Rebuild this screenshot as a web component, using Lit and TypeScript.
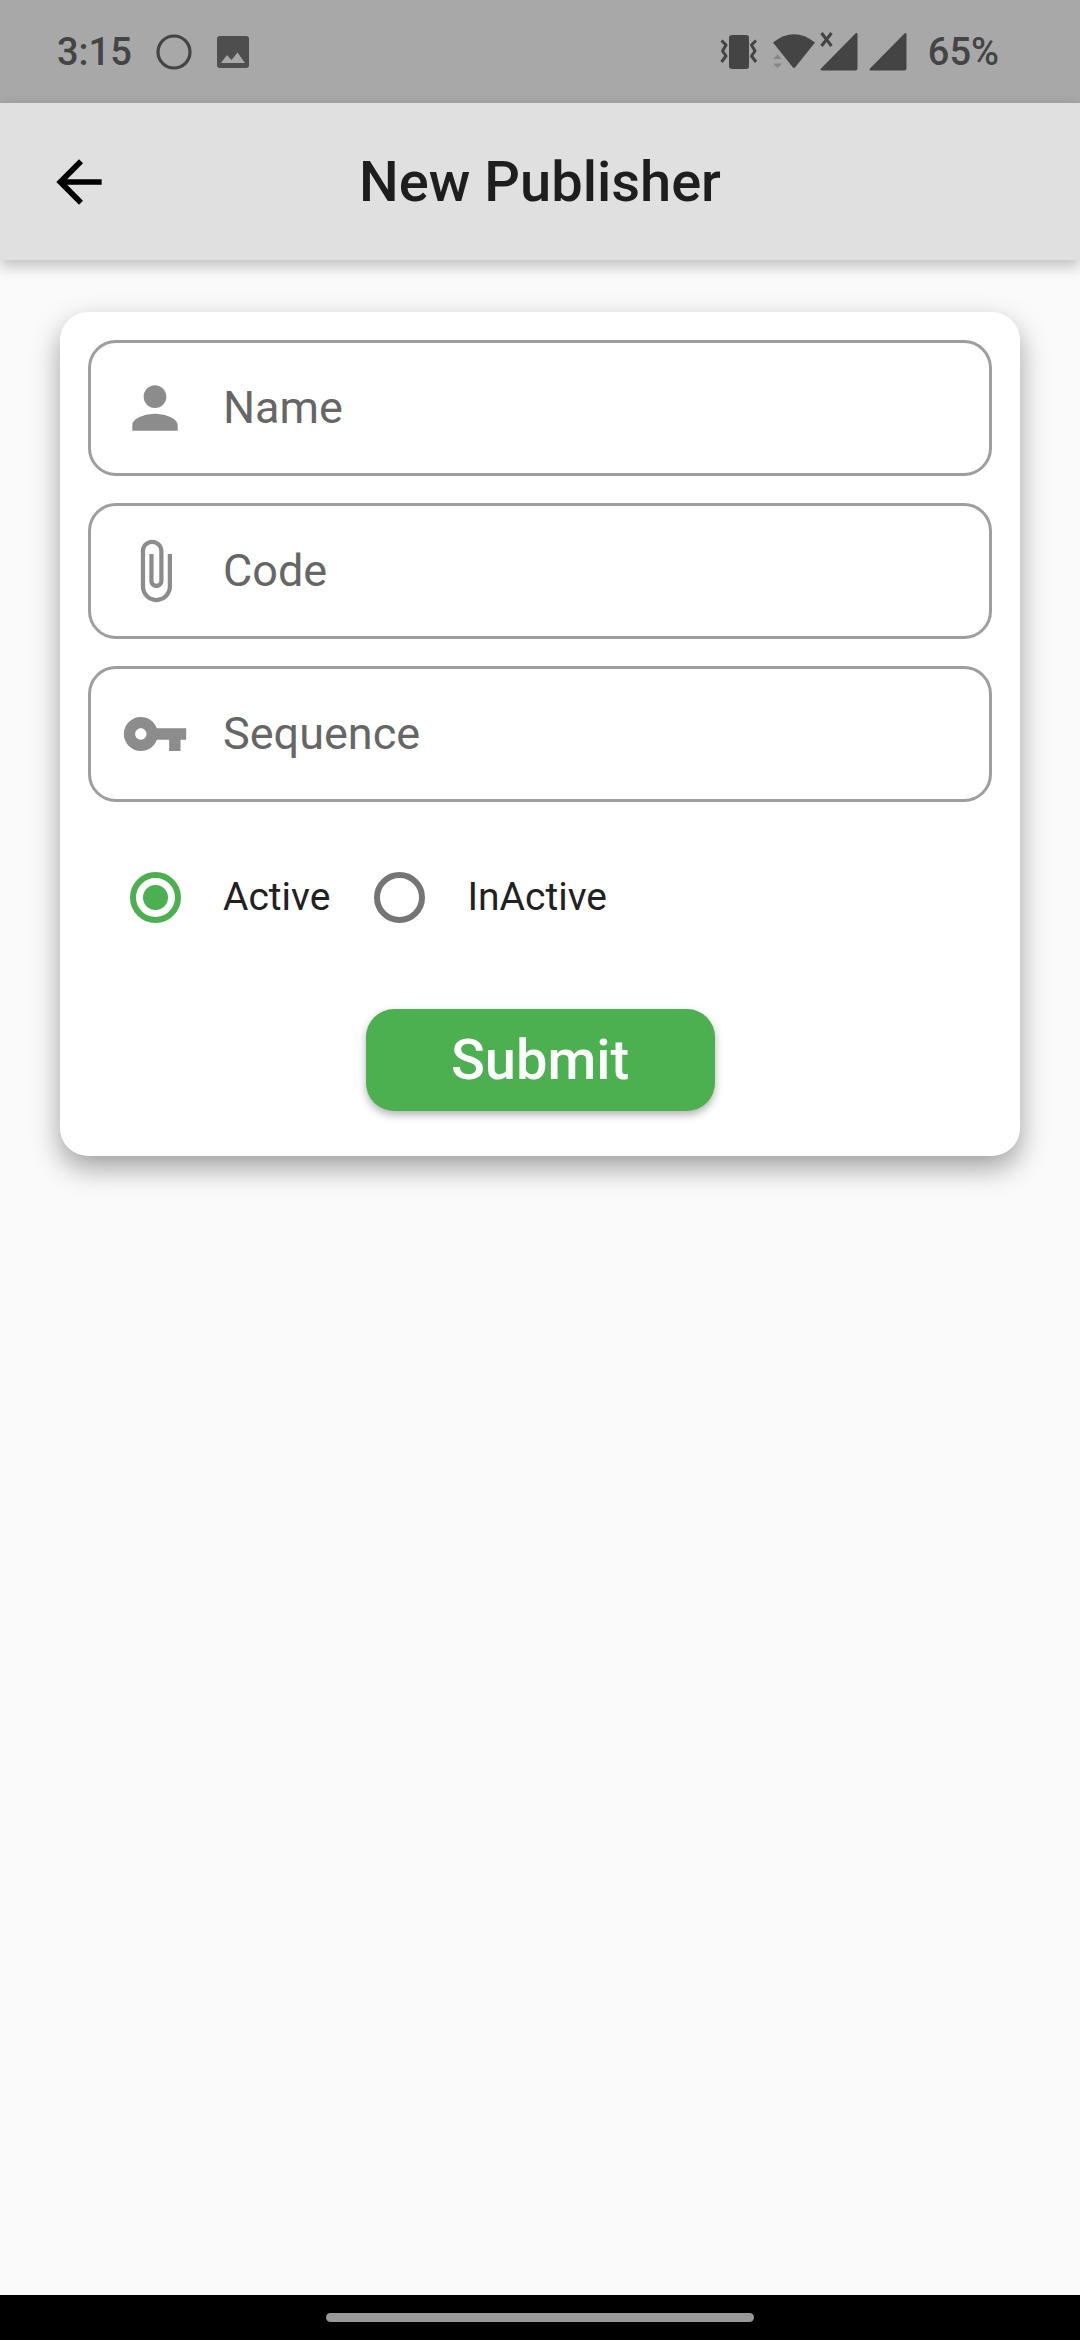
import { LitElement, html, css, svg } from "lit";
import { customElement, property, state } from "lit/decorators.js";

const icons = {
  person: svg`<path d="M12 12c2.21 0 4-1.79 4-4s-1.79-4-4-4-4 1.79-4 4 1.79 4 4 4zm0 2c-2.67 0-8 1.34-8 4v2h16v-2c0-2.66-5.33-4-8-4z"/>`,
  clip: svg`<path d="M16.5 6v11.5c0 2.21-1.79 4-4 4s-4-1.79-4-4V5c0-1.38 1.12-2.5 2.5-2.5s2.500 1.120 2.500 2.500v10.500c0 .55-.45 1-1 1s-1-.45-1-1V6H10v9.500c0 1.380 1.120 2.500 2.500 2.500s2.500-1.120 2.500-2.500V5c0-2.210-1.790-4-4-4S7 2.790 7 5v12.500c0 3.040 2.460 5.500 5.500 5.500s5.500-2.460 5.500-5.500V6h-1.500z"/>`,
  key: svg`<path d="M12.650 10C11.830 7.670 9.610 6 7 6c-3.310 0-6 2.690-6 6s2.690 6 6 6c2.610 0 4.830-1.670 5.650-4H17v4h4v-4h2v-4H12.650zM7 14c-1.100 0-2-.9-2-2s.9-2 2-2 2 .9 2 2-.9 2-2 2z"/>`,
};

type IconName = keyof typeof icons;

@customElement("status-bar")
export class StatusBar extends LitElement {
  static styles = css`
    :host {
      display: flex;
      align-items: center;
      justify-content: space-between;
      height: 103px;
      padding: 0 81px 0 57px;
      box-sizing: border-box;
      background: #a8a8a8;
      color: #444;
      font: 500 38px/48px Roboto, sans-serif;
    }
    .group {
      display: flex;
      align-items: center;
      gap: 24px;
    }
    .right {
      gap: 14px;
    }
    .network {
      display: flex;
      gap: 4px;
    }
    svg {
      display: block;
      fill: currentColor;
    }
  `;

  private signal(crossed: boolean) {
    return html`<svg width="45" height="40" viewBox="0 0 45 40" aria-hidden="true">
      <path d="M36 1Q37.500 .5 37.500 2.500V36Q37.500 38.500 35 38.500H2Q-.5 38.500 1 36.500Z" />
      ${crossed
        ? svg`<path d="M1.500 1L11.500 14M11.500 1L1.500 14" fill="none" stroke="currentColor" stroke-width="3"/>`
        : null}
    </svg>`;
  }

  render() {
    return html`
      <div class="group">
        <span>3:15</span>
        <svg width="36" height="36" viewBox="0 0 36 36" aria-hidden="true">
          <circle cx="18" cy="18" r="16" fill="none" stroke="currentColor" stroke-width="3.200" />
        </svg>
        <svg width="34" height="34" viewBox="0 0 34 34" aria-hidden="true">
          <path
            fill="#4e4e4e"
            fill-rule="evenodd"
            d="M4 1H30Q33 1 33 4V30Q33 33 30 33H4Q1 33 1 30V4Q1 1 4 1ZM5 28H29L21.500 17.500L15.500 25L11 20Z"
          />
        </svg>
      </div>
      <div class="group right">
        <svg width="38" height="36" viewBox="0 0 38 36" aria-hidden="true">
          <rect x="9" y="1" width="20" height="34" rx="3" />
          <path
            d="M1.500 6.500L6 11L2.500 17L6 22L1.500 28M36 6.500L31.500 11L35 17L31.500 22L36 28"
            fill="none"
            stroke="currentColor"
            stroke-width="3"
            stroke-linejoin="round"
          />
        </svg>
        <div class="network">
          <svg width="44" height="40" viewBox="0 0 44 40" aria-hidden="true">
            <path d="M1 10.500Q22-6 43 10.500L23 35.500Q22 36.500 21 35.500Z" />
            <path d="M1 27L5.500 22.500L10 27ZM1 31.500L5.500 36L10 31.500Z" fill="#868686" />
          </svg>
          ${this.signal(true)} ${this.signal(false)}
        </div>
        <span>65%</span>
      </div>
    `;
  }
}

@customElement("text-field")
export class TextField extends LitElement {
  @property() label = "";
  @property() icon: IconName = "person";

  static styles = css`
    :host {
      display: block;
    }
    .field {
      display: flex;
      align-items: center;
      gap: 34px;
      height: 136px;
      padding: 0 30px;
      box-sizing: border-box;
      border: 3px solid #9e9e9e;
      border-radius: 28px;
    }
    .icon {
      flex: none;
      width: 68px;
      height: 68px;
      fill: #8c8c8c;
    }
    .input {
      flex: 1;
      min-width: 0;
      padding: 0;
      border: 0;
      outline: 0;
      background: none;
      color: #212121;
      font: 400 45px/56px Roboto, sans-serif;
    }
    .input::placeholder {
      color: #666;
      opacity: 1;
    }
  `;

  render() {
    return html`<label class="field">
      <svg class="icon" viewBox="0 0 24 24" aria-hidden="true">${icons[this.icon]}</svg>
      <input class="input" type="text" placeholder=${this.label} aria-label=${this.label} />
    </label>`;
  }
}

@customElement("app-root")
export class AppRoot extends LitElement {
  @state() private status = "Active";

  static styles = css`
    :host {
      display: flex;
      flex-direction: column;
      min-height: 100vh;
      background: #fafafa;
      color: #212121;
      font-family: Roboto, sans-serif;
    }
    .app-bar {
      display: grid;
      grid-template-columns: 1fr auto 1fr;
      align-items: center;
      height: 157px;
      padding: 0 45px;
      background: #e0e0e0;
      box-shadow: 0 6px 14px rgba(0, 0, 0, 0.24);
    }
    .back {
      width: 68px;
      height: 68px;
      padding: 0;
      border: 0;
      background: none;
      color: #000;
    }
    .back-icon {
      display: block;
      width: 68px;
      height: 68px;
    }
    .title {
      margin: 0;
      color: #1e1e1e;
      font-size: 56px;
      line-height: 68px;
      font-weight: 500;
    }
    .content {
      flex: 1;
      padding: 52px 60px;
    }
    .card {
      display: flex;
      flex-direction: column;
      gap: 27px;
      padding: 28px 28px 45px;
      border-radius: 28px;
      background: #fff;
      box-shadow: 0 12px 28px rgba(0, 0, 0, 0.36);
    }
    .choices {
      display: flex;
      gap: 44px;
      margin: 0;
      padding: 42px;
      border: 0;
    }
    .choice {
      display: flex;
      align-items: center;
      gap: 42px;
      font-size: 39px;
      line-height: 52px;
    }
    .radio {
      appearance: none;
      width: 51px;
      height: 51px;
      margin: 0;
      border: 6px solid #757575;
      border-radius: 50%;
    }
    .radio:checked {
      border-color: #4caf50;
      background: radial-gradient(circle, #4caf50 12px, transparent 13px);
    }
    .submit {
      align-self: center;
      width: 349px;
      height: 102px;
      margin-top: 17px;
      padding: 0;
      border: 0;
      border-radius: 28px;
      background: #4caf50;
      box-shadow: 0 4px 8px rgba(0, 0, 0, 0.3);
      color: #fff;
      font: 500 56px/68px Roboto, sans-serif;
    }
    .nav {
      display: flex;
      align-items: center;
      justify-content: center;
      height: 45px;
      background: #000;
    }
    .handle {
      width: 428px;
      height: 9px;
      border-radius: 5px;
      background: #999;
    }
  `;

  private choice(value: string) {
    return html`<label class="choice">
      <input
        class="radio"
        type="radio"
        name="status"
        .value=${value}
        .checked=${this.status === value}
        @change=${() => (this.status = value)}
      />
      <span>${value}</span>
    </label>`;
  }

  render() {
    return html`
      <status-bar></status-bar>
      <header class="app-bar">
        <button class="back" type="button" aria-label="Back">
          <svg class="back-icon" viewBox="0 0 24 24" aria-hidden="true">
            <path fill="currentColor" d="M20 11H7.830l5.590-5.590L12 4l-8 8 8 8 1.410-1.410L7.830 13H20v-2z" />
          </svg>
        </button>
        <h1 class="title">New Publisher</h1>
      </header>
      <main class="content">
        <form class="card" @submit=${(e: Event) => e.preventDefault()}>
          <text-field label="Name" icon="person"></text-field>
          <text-field label="Code" icon="clip"></text-field>
          <text-field label="Sequence" icon="key"></text-field>
          <fieldset class="choices" aria-label="Status">
            ${this.choice("Active")} ${this.choice("InActive")}
          </fieldset>
          <button class="submit" type="submit">Submit</button>
        </form>
      </main>
      <footer class="nav"><div class="handle"></div></footer>
    `;
  }
}
